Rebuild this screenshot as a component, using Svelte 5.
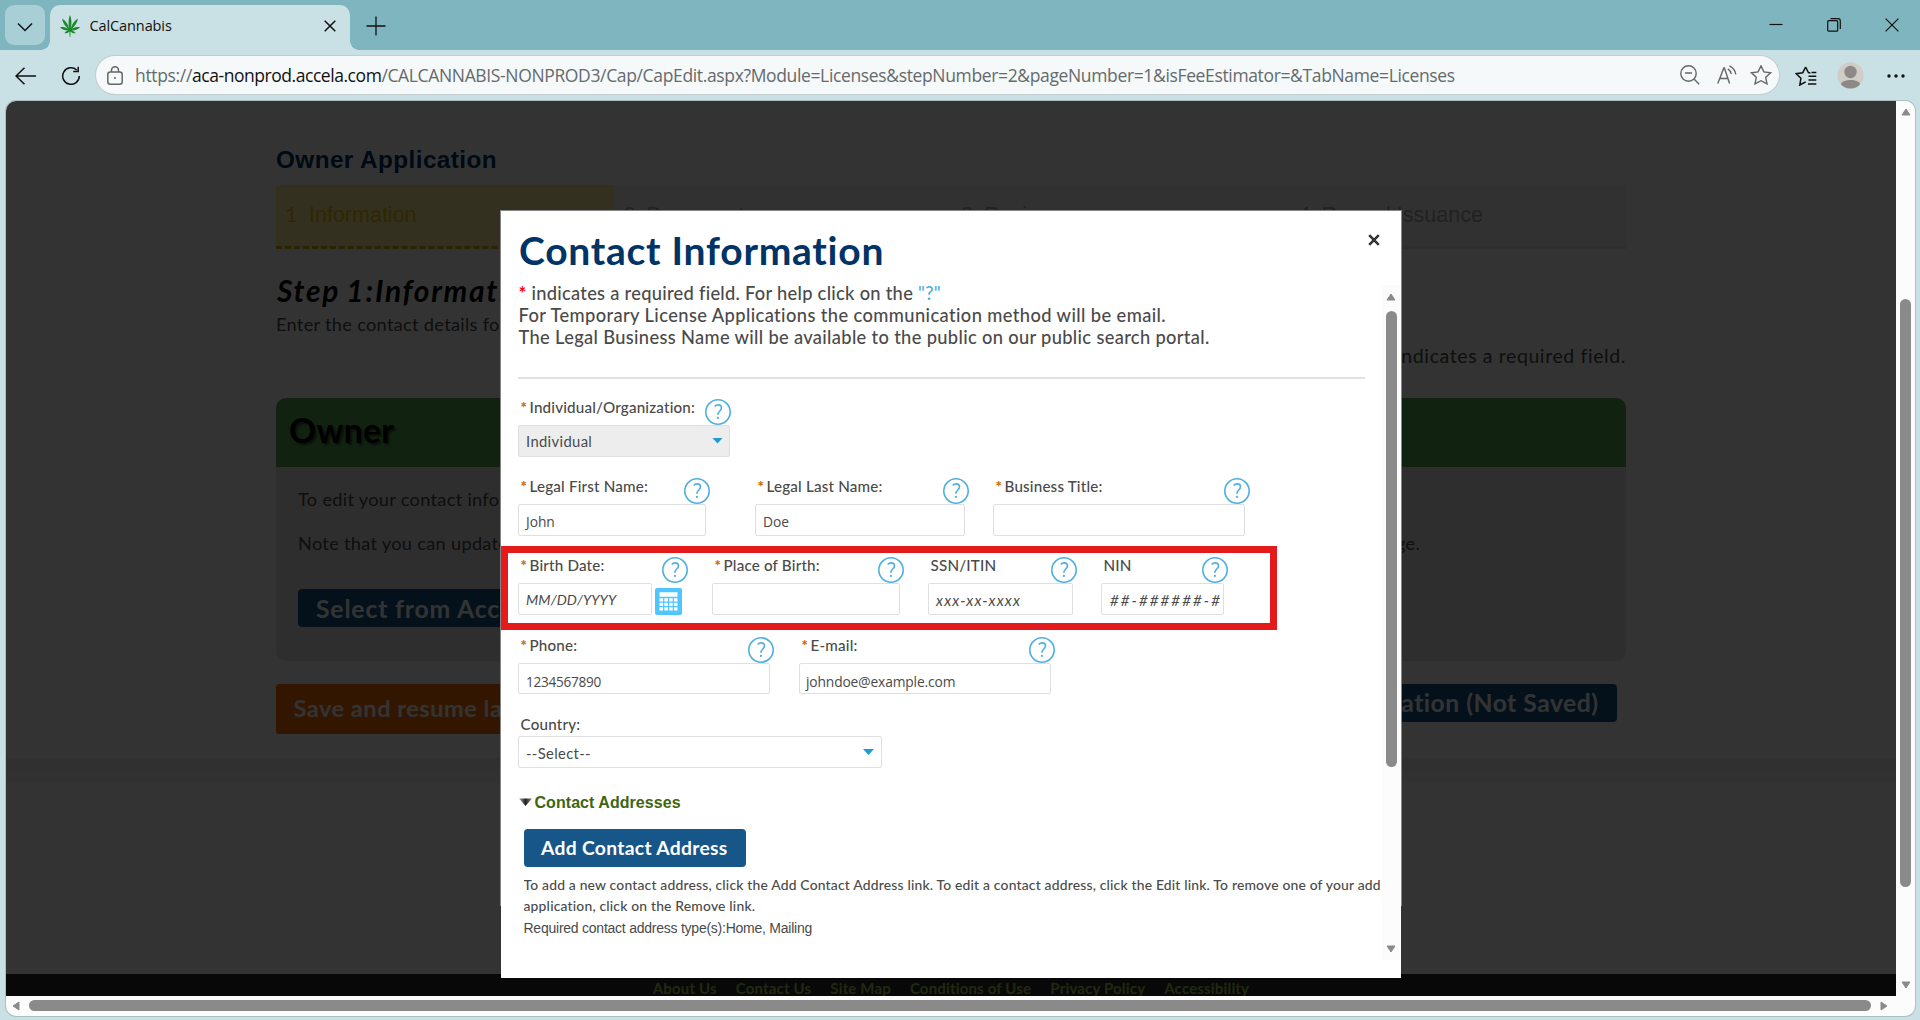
<script>
  const steps = [
    { n: '1', name: 'Information', active: true },
    { n: '2', name: 'Documents' },
    { n: '3', name: 'Review' },
    { n: '4', name: 'Record Issuance' }
  ];

  // w: input width, lw: label line width, gap: space before the field
  const rows = [
    [
      { label: 'Individual/Organization:', req: true, w: 212, lw: 213, gap: 0, value: 'Individual', kind: 'select off' }
    ],
    [
      { label: 'Legal First Name:', req: true, w: 188, lw: 192, gap: 0, value: 'John', kind: 'typed' },
      { label: 'Legal Last Name:', req: true, w: 210, lw: 214, gap: 49, value: 'Doe', kind: 'typed' },
      { label: 'Business Title:', req: true, w: 252, lw: 257, gap: 28, value: '', kind: 'typed' }
    ],
    [
      { label: 'Birth Date:', req: true, w: 134, lw: 170, gap: 0, value: 'MM/DD/YYYY', kind: 'hint', cal: true },
      { label: 'Place of Birth:', req: true, w: 188, lw: 192, gap: 30, value: '', kind: 'typed' },
      { label: 'SSN/ITIN', w: 145, lw: 149, gap: 28, value: 'xxx-xx-xxxx', kind: 'hint ssn' },
      { label: 'NIN', w: 123, lw: 127, gap: 28, value: '##-######-#', kind: 'hint nin' }
    ],
    [
      { label: 'Phone:', req: true, w: 252, lw: 256, gap: 0, value: '1234567890', kind: 'typed digits low' },
      { label: 'E-mail:', req: true, w: 252, lw: 256, gap: 29, value: 'johndoe@example.com', kind: 'typed low mail' }
    ]
  ];

  const links = ['About Us', 'Contact Us', 'Site Map', 'Conditions of Use', 'Privacy Policy', 'Accessibility'];
</script>

<div class="window">
  <div class="tabs">
    <div class="tabmenu"><svg width="16" height="10" viewBox="0 0 16 10"><path d="M1 1.5l7 7 7-7" /></svg></div>
    <div class="tab">
      <svg class="leaf" width="20" height="22" viewBox="0 0 20 22">
        <path d="M10 0c1.5 3.500 2 8 .8 13.500C12 9 14.500 5.500 18 3.500c-.8 4-3 7.600-6 10.300 2.700-1.500 5-2 8-1.500-2.300 2.400-5 3.400-8.200 3.300 1.700.5 3 1.400 3.800 2.700-2 .3-3.700-.4-5-1.800L10.300 22h-.6l-.3-5.500c-1.300 1.400-3 2.100-5 1.800.8-1.300 2.100-2.200 3.800-2.700C5 15.700 2.300 14.700 0 12.300c3-.5 5.300 0 8 1.500-3-2.700-5.200-6.300-6-10.300 3.500 2 6 5.500 7.200 10C8 8 8.500 3.500 10 0z" />
      </svg>
      <span class="tabname">CalCannabis</span>
      <svg class="x" width="12" height="12" viewBox="0 0 12 12"><path d="M.7.7l10.600 10.600M11.300.7L.7 11.300" /></svg>
    </div>
    <svg class="plus" width="20" height="20" viewBox="0 0 20 20"><path d="M10 .5v19M.5 10h19" /></svg>
    <div class="controls">
      <svg width="14" height="14" viewBox="0 0 14 14"><path d="M.5 6.500h13" /></svg>
      <svg width="14" height="14" viewBox="0 0 14 14"><rect x=".7" y="2.700" width="10" height="10.500" rx="1" /><path d="M3.500.7h7.500q2.300 0 2.300 2.300v8" /></svg>
      <svg width="14" height="14" viewBox="0 0 14 14"><path d="M.6.6l12.800 12.800M13.400.6L.6 13.400" /></svg>
    </div>
  </div>

  <div class="toolbar">
    <svg class="back" width="22" height="18" viewBox="0 0 22 18"><path d="M9.500.8L1 9l8.500 8.200M1 9h20" /></svg>
    <svg class="reload" width="20" height="20" viewBox="0 0 20 20"><path d="M18.300 10a8.300 8.300 0 1 1-2.600-6M17.200.8v4.800h-5" /></svg>
    <div class="address">
      <svg class="lock" width="16" height="19" viewBox="0 0 16 19"><rect x=".8" y="6" width="14.400" height="12.200" rx="2.500" /><path d="M4.500 6V4.300a3.500 3.500 0 0 1 7 0V6" /><circle cx="8" cy="12" r=".9" /></svg>
      <div class="url"><span class="s">https://</span><span class="d">aca-nonprod.accela.com</span><span class="p">/CALCANNABIS-NONPROD3/Cap/CapEdit.aspx?Module=Licenses&amp;stepNumber=2&amp;pageNumber=1&amp;isFeeEstimator=&amp;TabName=Licenses</span></div>
      <svg class="g" width="20" height="20" viewBox="0 0 20 20"><circle cx="8.500" cy="8.500" r="7.700" /><path d="M14 14l5.200 5.200M5 8h7" /></svg>
      <svg class="g" width="20" height="20" viewBox="0 0 20 20"><path d="M.8 18.500L6.800 3h.6l5.200 15.500M2.700 13.500h8.400M10.800 3.800q3 1.800 3.400 5.200M12.500.8q5.500 2.800 6.300 8.500" /></svg>
      <svg class="g" width="22" height="20" viewBox="0 0 22 20"><path d="M11 .9l2.900 6 6.700.9-4.900 4.500 1.300 6.600L11 15.700l-6 3.200 1.300-6.600L1.400 7.800l6.700-.9z" /></svg>
    </div>
    <svg class="fav" width="22" height="20" viewBox="0 0 22 20"><path d="M10.600 1L7.800 6.700l-6.600 1 4.700 4.600L4.800 19l5.900-3.200M10.600 1l2.800 5.600 2 .3M13.500 10.200h7.800M13.500 14h7.800M16.500 6.500h4.800M13 18h8.300" /></svg>
    <svg class="avatar" width="27" height="27" viewBox="0 0 27 27"><circle cx="13.500" cy="13.500" r="13.200" fill="#d0ccc8" /><circle cx="13.500" cy="10" r="6.200" fill="#8c8986" /><path d="M4 22.500c0-6 19-6 19 0-4.500 5.300-14.500 5.300-19 0z" fill="#8c8986" /></svg>
    <svg class="dots" width="18" height="4" viewBox="0 0 18 4"><circle cx="2" cy="2" r="1.700" /><circle cx="9" cy="2" r="1.700" /><circle cx="16" cy="2" r="1.700" /></svg>
  </div>

  <div class="panel">
    <div class="view">
      <div class="page">
        <h1>Owner Application</h1>
        <div class="steps">
          {#each steps as s}
            <div class="step" class:active={s.active}><span class="num">{s.n}</span><span>{s.name}</span></div>
          {/each}
        </div>
        <h2>Step 1:Information</h2>
        <p class="enter">Enter the contact details for</p>
        <p class="reqnote">indicates a required field.</p>
        <section class="card">
          <h3>Owner</h3>
          <div class="cardbody">
            <p>To edit your contact info</p>
            <p class="note"><span>Note that you can update</span><span>page.</span></p>
            <button class="blue pick">Select from Account</button>
          </div>
        </section>
        <div class="actions">
          <button class="save">Save and resume later</button>
          <button class="blue cancel">Application (Not Saved)</button>
        </div>
      </div>
      <div class="band"></div>
      <footer>{#each links as l}<a href="#top">{l}</a>{/each}</footer>
      <div class="shade"></div>

      <div class="modal">
        <svg class="close" width="12" height="12" viewBox="0 0 12 12"><path d="M1.200 1.200l9.600 9.600M10.800 1.200l-9.600 9.600" /></svg>
        <div class="title">Contact Information</div>
        <div class="intro">
          <div class="i1"><b>*</b> indicates a required field. For help click on the <em>"?"</em></div>
          <div class="i2">For Temporary License Applications the communication method will be email.</div>
          <div class="i3">The Legal Business Name will be available to the public on our public search portal.</div>
        </div>
        <div class="rule"></div>
        <div class="form">
          {#each rows as row}
            <div class="row">
              {#each row as f}
                <div class="field" style:width="{f.w}px" style:margin-left="{f.gap}px">
                  <div class="label" style:width="{f.lw}px">
                    {#if f.req}<span class="star">*</span>{/if}<span class="name">{f.label}</span>
                    <svg class="help" width="26" height="26" viewBox="0 0 26 26"><circle cx="13" cy="13" r="12.200" /><path d="M9.700 7.500q1.300-1.600 3.500-1.600c2.100 0 3.300 1.200 3.300 2.900 0 3.200-3.600 3.200-3.600 6.900" /><circle class="pt" cx="12.900" cy="18.900" r="1.100" /></svg>
                  </div>
                  <div class="line">
                    <div class="input {f.kind}" style:width="{f.w}px">
                      <span>{f.value}</span>
                      {#if f.kind.startsWith('select')}<i class="caret"></i>{/if}
                    </div>
                    {#if f.cal}
                      <svg class="cal" width="27" height="27" viewBox="0 0 27 27"><rect width="27" height="27" rx="2" fill="#4fc6fd" /><path fill="#fff" d="M4.500 4.300h18v4.500h-18zM4.500 10.200h3.600v3.200H4.500zM9.300 10.200h3.600v3.200H9.300zM14.100 10.200h3.600v3.200h-3.600zM18.900 10.200h3.600v3.200h-3.600zM4.500 14.700h3.600v3.200H4.500zM9.300 14.700h3.600v3.200H9.300zM14.100 14.700h3.600v3.200h-3.600zM18.900 14.700h3.600v3.200h-3.600zM4.500 19.200h3.600v3.200H4.500zM9.300 19.200h3.600v3.200H9.300zM14.100 19.200h3.600v3.200h-3.600zM18.900 19.200h3.600v3.200h-3.600z" /></svg>
                    {/if}
                  </div>
                </div>
                {#if f.cal}<div class="calspace"></div>{/if}
              {/each}
            </div>
          {/each}
          <div class="country">
            <div class="clabel">Country:</div>
            <div class="input select wide"><span>--Select--</span><i class="caret"></i></div>
          </div>
        </div>
        <div class="addrhead"><svg width="13" height="9" viewBox="0 0 13 9"><defs><linearGradient id="tri" x1="0" x2="1"><stop offset="0" stop-color="#aaa" /><stop offset=".5" stop-color="#222" /><stop offset="1" stop-color="#888" /></linearGradient></defs><path d="M0 .5h13L6.500 8z" fill="url(#tri)" /></svg>Contact Addresses</div>
        <button class="blue add">Add Contact Address</button>
        <div class="help1">To add a new contact address, click the Add Contact Address link. To edit a contact address, click the Edit link. To remove one of your add<br />application, click on the Remove link.</div>
        <div class="help2">Required contact address type(s):Home, Mailing</div>

        <div class="mscroll">
          <svg width="10" height="8" viewBox="0 0 10 8"><path d="M5 1L9 7H1z" /></svg>
          <div class="mthumb"></div>
          <svg class="end" width="10" height="8" viewBox="0 0 10 8"><path d="M5 7L9 1H1z" /></svg>
        </div>
        <div class="mark"></div>
      </div>
    </div>
    <div class="vscroll">
      <svg width="10" height="8" viewBox="0 0 10 8"><path d="M5 1L9 7H1z" /></svg>
      <div class="vthumb"></div>
      <svg class="end" width="10" height="8" viewBox="0 0 10 8"><path d="M5 7L9 1H1z" /></svg>
    </div>
    <div class="hscroll">
      <svg width="8" height="10" viewBox="0 0 8 10"><path d="M1 5l6-4v8z" /></svg>
      <div class="hthumb"></div>
      <svg width="8" height="10" viewBox="0 0 8 10"><path d="M7 5L1 1v8z" /></svg>
    </div>
  </div>
</div>

<style>
  :global(body) { margin: 0; overflow: hidden; }
  .window { width: 1920px; height: 1020px; background: #c9e0e4; overflow: hidden; font-family: Lato, "Liberation Sans", sans-serif; }
  h1, h2, h3, p { margin: 0; }
  svg { display: block; flex: none; fill: none; stroke: #111; stroke-width: 1.500; }
  button { display: block; border: 0; font-family: inherit; text-align: left; white-space: nowrap; box-sizing: border-box; }

  .tabs { display: flex; height: 50px; background: #7eb5be; box-sizing: border-box; align-items: center; }
  .tabmenu { width: 40px; height: 40px; margin-left: 5px; border-radius: 9px; background: #a8cfd6; display: grid; place-items: center; }
  .tabmenu svg { margin-top: 3px; }
  .tab { position: relative; width: 300px; height: 45px; margin: 5px 0 0 5px; border-radius: 10px 10px 0 0; background: #c9e1e4; display: flex; align-items: center; box-sizing: border-box; padding: 0 14px 4px 10px; }
  .tab::before, .tab::after { content: ''; position: absolute; bottom: 0; width: 9px; height: 9px; }
  .tab::before { left: -9px; background: radial-gradient(circle at 0 0, transparent 8.500px, #c9e1e4 9px); }
  .tab::after { right: -9px; background: radial-gradient(circle at 100% 0, transparent 8.500px, #c9e1e4 9px); }
  .leaf { fill: #1c8a2b; stroke: none; }
  .tabname { font: 14.500px/20px "Open Sans", sans-serif; letter-spacing: -.1px; margin-left: 9.500px; color: #111; flex: 1; }
  .plus { margin-left: 15.500px; margin-top: 1px; stroke-width: 1.300; }
  .controls { display: flex; gap: 44px; margin: -1px 21.500px 0 auto; }
  .controls svg { stroke-width: 1.200; }

  .toolbar { display: flex; align-items: center; height: 51px; }
  .back { margin-left: 15px; }
  .reload { margin-left: 24px; }
  .address { width: 1683px; height: 38px; margin: -1px 0 0 15px; background: #f5f9fa; border-radius: 20px; box-shadow: 0 0 0 1px #c2cdd0; display: flex; align-items: center; }
  .lock { margin-left: 11px; stroke: #666; }
  .lock circle { fill: #555; stroke: none; }
  .url { flex: 1; margin-left: 12px; font: 17.500px/24px "Open Sans", sans-serif; color: #666a6b; white-space: nowrap; padding-bottom: 1px; }
  .s { letter-spacing: -.34px; }
  .d { letter-spacing: -.45px; color: #111; }
  .p { letter-spacing: -.355px; }
  .g { stroke: #666; stroke-width: 1.400; margin-right: 17px; }
  .g:nth-last-child(2) { margin-right: 13px; }
  .g:last-child { margin-right: 7.500px; }
  .fav { margin-left: 15.500px; }
  .avatar { margin-left: 20px; stroke: none; }
  .dots { margin-left: 23.500px; fill: #111; stroke: none; }

  .panel { width: 1909px; height: 915px; margin-left: 6px; display: grid; grid-template: 895px 20px / 1890px 19px; background: #fcfcfc; border-radius: 10px; overflow: hidden; box-shadow: 0 0 0 1px #aebfc4; }
  .panel > * { min-width: 0; }
  .view { position: relative; overflow: hidden; background: #fff; }
  .shade { position: absolute; inset: 0; background: rgba(0, 0, 0, .8); }

  .page { width: 1350px; margin-left: 270px; padding-top: 44.500px; }
  h1 { font: 700 24.300px/28px "Liberation Sans", Arial, sans-serif; letter-spacing: .43px; color: #003366; }
  .steps { display: grid; grid-template-columns: repeat(4, 337.500px); margin-top: 11.500px; }
  .step { display: flex; height: 61px; background: #f6f6f6; border-bottom: 3px solid #e6e6e6; padding-left: 10px; gap: 11px; font: 21.500px/61px "Liberation Sans", Arial, sans-serif; color: #a6a6a6; }
  .active { background: #fff0a0; border-bottom: 3px dashed #c8b000; color: #e8c200; padding-left: 9px; gap: 12px; }
  .num { width: 12px; }
  .active .num { font-family: Lato, sans-serif; line-height: 59px; }
  h2 { font: italic 700 30px/34px Lato, sans-serif; letter-spacing: 1.700px; word-spacing: -2px; color: #000; margin-top: 24px; padding-left: 1px; }
  p { font-size: 18.200px; line-height: 22px; letter-spacing: .3px; color: #4a4a4a; white-space: nowrap; }
  .enter { margin-top: 6px; }
  .reqnote { margin-top: 9px; font-size: 19.500px; line-height: 24px; letter-spacing: .6px; text-align: right; }
  .card { margin-top: 30px; height: 263px; border-radius: 10px; overflow: hidden; background: #e6e6e6; }
  h3 { height: 69px; background: #55aa55; font: 700 33.500px/64px Lato, sans-serif; letter-spacing: .4px; color: #000; text-shadow: 2px 2px 2px rgba(0, 0, 0, .5); padding-left: 13px; }
  .cardbody { padding: 21px 22px 0 22px; }
  .note { display: flex; justify-content: space-between; width: 1122px; margin-top: 22px; }
  .blue { background: #175689; color: #fff; border-radius: 4px; font-weight: 700; }
  .pick, .cancel { font-size: 24.700px; letter-spacing: .85px; height: 38px; line-height: 35px; padding: 0 18px; }
  .pick { margin-top: 35px; }
  .actions { display: flex; justify-content: space-between; align-items: flex-start; margin-top: 23px; padding-right: 9px; height: 50px; }
  .save { height: 50px; background: #ff6d00; color: #fff; font-weight: 700; font-size: 23.700px; line-height: 46px; letter-spacing: .45px; padding: 0 17.500px 2px; border-radius: 3px; }
  .cancel { padding: 0 18.500px 2px; letter-spacing: .5px; }
  .band { height: 216px; margin-top: 24px; background: linear-gradient(#eee 0 15px, #f6f6f6 15px 25px, #fff 25px); }
  footer { display: flex; justify-content: center; gap: 19px; height: 22px; overflow: hidden; background: #2b2b2b; }
  footer a { font-weight: 700; font-size: 15px; line-height: 28px; letter-spacing: .17px; color: #9fcc4b; text-decoration: none; }

  .modal { position: absolute; left: 495px; top: 110px; width: 900px; height: 767px; box-sizing: border-box; background: #fff; padding: 16px 0 0 17px; color: #4a4a4a; }
  .modal::before { content: ''; position: absolute; left: -1px; top: -1px; width: 900px; height: 695px; border: 1px solid #858585; border-bottom: 0; pointer-events: none; }
  .close { position: absolute; left: 867px; top: 23px; stroke: #333; stroke-width: 2.500; }
  .title { font-size: 39px; line-height: 46px; font-weight: 700; letter-spacing: .75px; color: #003366; padding-left: 1px; }
  .intro { margin-top: 9px; font-size: 18.300px; line-height: 22px; font-weight: 500; padding-left: .5px; white-space: nowrap; }
  .i1 { letter-spacing: .28px; }
  .i2 { letter-spacing: .4px; }
  .i3 { letter-spacing: .335px; }
  .i1 b { color: #f00; }
  .i1 em { font-style: normal; color: #4fb0df; }
  .rule { height: 2px; width: 847px; background: #e2e2e2; margin-top: 29px; }

  .form { padding-top: 19px; }
  .row { display: flex; height: 79px; }
  .row:nth-child(3) { height: 80px; }
  .row:nth-child(4) { height: 73px; }
  .field { flex: none; }
  .label { display: flex; height: 27px; padding-left: 2.500px; box-sizing: border-box; font-size: 15.200px; line-height: 18px; font-weight: 500; letter-spacing: .18px; white-space: nowrap; }
  .star { width: 9px; color: #d06a00; font-weight: 900; }
  .name { flex: 1; }
  .help { stroke: #4fb0df; stroke-width: 1.600; margin-top: 1px; }
  .pt { fill: #4fb0df; stroke: none; }
  .line { display: flex; }
  .cal { margin: 5px 0 0 3px; stroke: none; }
  .calspace { width: 30px; flex: none; }
  .input { flex: none; height: 32px; box-sizing: border-box; border: 1px solid #dfdfdf; border-radius: 2px; display: flex; align-items: center; justify-content: space-between; padding: 0 6px 0 7px; font-size: 14.800px; line-height: 20px; letter-spacing: .35px; white-space: nowrap; }
  .off { background: #ededed; padding-bottom: 1px; }
  .caret { width: 11px; height: 6px; background: #1f9bd8; clip-path: polygon(0 0, 100% 0, 50% 100%); }
  .typed { font-family: "Open Sans", sans-serif; font-size: 13.800px; letter-spacing: -.05px; padding-top: 3px; }
  .low { height: 31px; padding-top: 7px; }
  .digits { font-size: 13.600px; letter-spacing: -.28px; }
  .mail { letter-spacing: -.14px; padding-left: 6px; }
  .hint { font-style: italic; font-size: 14.200px; letter-spacing: .08px; padding-top: 1px; }
  .ssn { font-size: 15px; letter-spacing: 1.200px; }
  .nin { font-size: 15px; letter-spacing: 2.100px; padding: 1px 0 0 8px; }
  .clabel { height: 27px; line-height: 31px; padding-left: 2.500px; font-size: 15.200px; font-weight: 500; letter-spacing: .18px; }
  .wide { width: 364px; padding: 1px 7px 0 7px; }
  .wide .caret { margin-bottom: 1px; }
  .addrhead { display: flex; align-items: center; gap: 3px; margin-top: 24.500px; padding-left: .5px; font: 700 16px/20px "Liberation Sans", Arial, sans-serif; letter-spacing: .05px; color: #3f650f; }
  .addrhead svg { stroke: none; }
  .add { width: 222px; height: 38px; margin: 16px 0 0 6px; font-size: 19.300px; line-height: 35px; letter-spacing: .3px; padding: 0 17px 1px; }
  .help1 { width: 862px; overflow: hidden; margin: 7px 0 0 5.500px; font-size: 13.900px; line-height: 21px; font-weight: 500; letter-spacing: .185px; white-space: nowrap; }
  .help2 { margin: 1px 0 0 5.500px; font: 14px/22px "Liberation Sans", Arial, sans-serif; letter-spacing: -.24px; }
  .mark { position: absolute; left: 0; top: 335px; width: 776px; height: 84px; box-sizing: border-box; border: 7.500px solid #e41b1b; }

  .mscroll, .vscroll { display: flex; flex-direction: column; align-items: center; background: #fcfcfc; box-sizing: border-box; }
  .mscroll svg, .vscroll svg, .hscroll svg { fill: #8a8a8a; stroke: #8a8a8a; stroke-width: 1; stroke-linejoin: round; }
  .mscroll { position: absolute; left: 881px; top: 74px; width: 18px; height: 675px; padding: 8px 0 7px; }
  .mthumb { width: 11px; height: 456px; margin-top: 10px; background: #8a8a8a; border-radius: 6px; }
  .end { margin-top: auto; }
  .vscroll { padding: 7px 0 7px; }
  .vthumb { width: 11px; height: 588px; margin-top: 183px; background: #8a8a8a; border-radius: 6px; }
  .hscroll { grid-column: 1 / 3; display: flex; align-items: center; padding: 0 27px 1px 6px; justify-content: space-between; box-sizing: border-box; }
  .hthumb { width: 1842px; height: 11px; background: #8a8a8a; border-radius: 6px; }
</style>
